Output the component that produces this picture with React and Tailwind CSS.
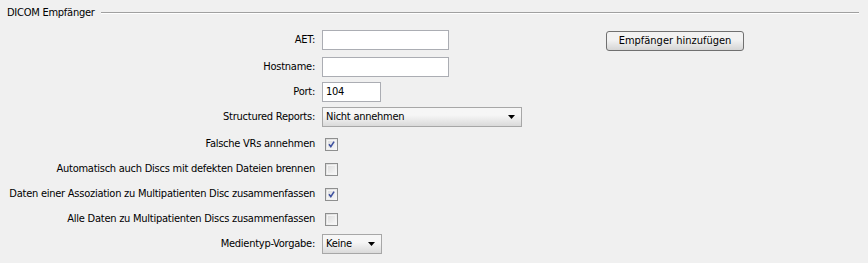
const Checkbox = ({ checked }) => (
  <div className="ml-[3px] w-[13px] h-[13px] border border-[#8e8f8f] bg-gradient-to-br from-[#d8d8d8] to-[#fbfbfb] p-px">
    <div className="w-full h-full border border-[#f4f4f4] flex items-center justify-center">
      {checked && (
        <svg width="9" height="9" viewBox="0 0 9 9">
          <path d="M1.2 4.3 L3.6 7.2 L7.8 0.8" fill="none" stroke="#3e51a0" strokeWidth="2" />
        </svg>
      )}
    </div>
  </div>
)

const Combo = ({ value, width }) => (
  <div className={"h-[20px] border border-[#a7a7a7] bg-gradient-to-b from-[#f6f6f6] from-40% to-[#dadada] flex items-center pl-[3px] pr-[6px] " + width}>
    <span className="flex-1">{value}</span>
    <svg width="7" height="4" viewBox="0 0 7 4">
      <path d="M0 0 H7 L3.5 4 Z" fill="#000" />
    </svg>
  </div>
)

const Row = ({ label, children, className = "" }) => (
  <div className={"flex items-center h-[20px] " + className}>
    <div className="w-[316px] text-right pr-[1px] whitespace-nowrap">{label}</div>
    <div className="ml-[6px] flex items-center">{children}</div>
  </div>
)

const TextInput = ({ value = "", width }) => (
  <div className={"h-[20px] border border-[#abadb3] bg-white flex items-center pl-[3px] " + width}>{value}</div>
)

export default function App() {
  return (
    <div className="w-[868px] h-[263px] bg-[#f0f0f0] text-black text-[11px] tracking-[-0.25px] font-['Tahoma','DejaVu_Sans_Condensed','DejaVu_Sans',sans-serif] overflow-hidden">
      {/* fieldset header */}
      <div className="flex items-center h-[26px] pl-[7px] pr-[9px]">
        <span>DICOM Empfänger</span>
        <div className="flex-1 ml-[6px] border-t border-t-[#a0a0a0] border-b border-b-white" />
      </div>

      <div className="flex flex-col pt-[4px]">
        <Row label="AET:">
          <TextInput width="w-[127px]" />
          <button className="ml-[157px] mt-[2px] w-[138px] h-[20px] rounded-[3px] border border-[#707070] bg-gradient-to-b from-[#f2f2f2] from-45% to-[#d5d5d5] tracking-normal">
            Empfänger hinzufügen
          </button>
        </Row>
        <Row label="Hostname:" className="mt-[7px]">
          <TextInput width="w-[127px]" />
        </Row>
        <Row label="Port:" className="mt-[5px]">
          <TextInput value="104" width="w-[59px]" />
        </Row>
        <Row label="Structured Reports:" className="mt-[5px]">
          <Combo value="Nicht annehmen" width="w-[200px]" />
        </Row>
        <Row label="Falsche VRs annehmen" className="mt-[7px]">
          <Checkbox checked />
        </Row>
        <Row label="Automatisch auch Discs mit defekten Dateien brennen" className="mt-[5px]">
          <Checkbox />
        </Row>
        <Row label="Daten einer Assoziation zu Multipatienten Disc zusammenfassen" className="mt-[5px]">
          <Checkbox checked />
        </Row>
        <Row label="Alle Daten zu Multipatienten Discs zusammenfassen" className="mt-[5px]">
          <Checkbox />
        </Row>
        <Row label="Medientyp-Vorgabe:" className="mt-[5px]">
          <Combo value="Keine" width="w-[60px]" />
        </Row>
      </div>
    </div>
  )
}
